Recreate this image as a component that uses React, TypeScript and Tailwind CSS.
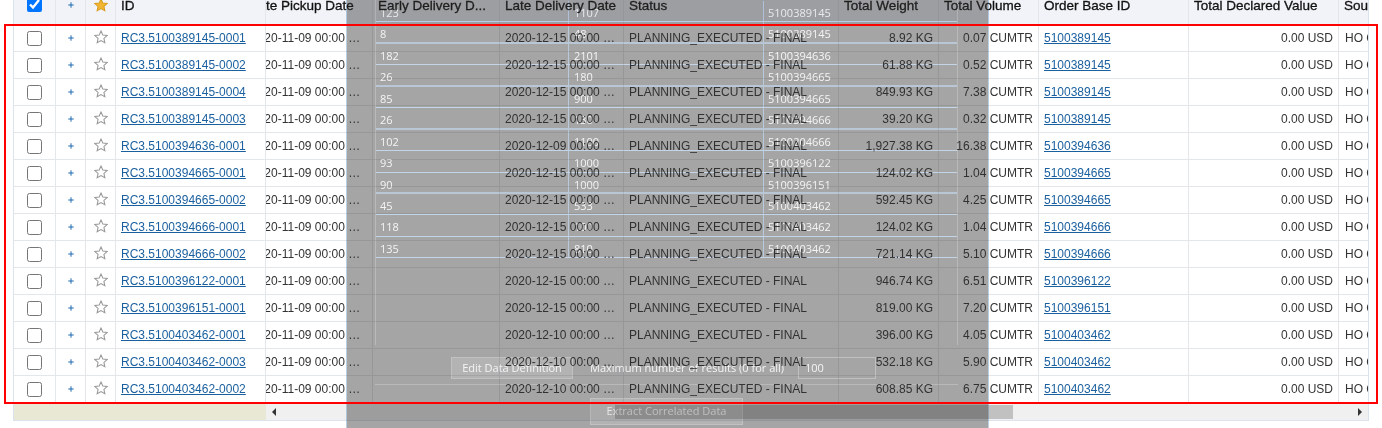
import { Plus } from "lucide-react";

type Rec = { id: string; late: string; weight: string; volume: string; base: string };

const recs: Rec[] = [
  { id: "RC3.5100389145-0001", late: "2020-12-15", weight: "8.92 KG", volume: "0.07", base: "5100389145" },
  { id: "RC3.5100389145-0002", late: "2020-12-15", weight: "61.88 KG", volume: "0.52", base: "5100389145" },
  { id: "RC3.5100389145-0004", late: "2020-12-15", weight: "849.93 KG", volume: "7.38", base: "5100389145" },
  { id: "RC3.5100389145-0003", late: "2020-12-15", weight: "39.20 KG", volume: "0.32", base: "5100389145" },
  { id: "RC3.5100394636-0001", late: "2020-12-09", weight: "1,927.38 KG", volume: "16.38", base: "5100394636" },
  { id: "RC3.5100394665-0001", late: "2020-12-15", weight: "124.02 KG", volume: "1.04", base: "5100394665" },
  { id: "RC3.5100394665-0002", late: "2020-12-15", weight: "592.45 KG", volume: "4.25", base: "5100394665" },
  { id: "RC3.5100394666-0001", late: "2020-12-15", weight: "124.02 KG", volume: "1.04", base: "5100394666" },
  { id: "RC3.5100394666-0002", late: "2020-12-15", weight: "721.14 KG", volume: "5.10", base: "5100394666" },
  { id: "RC3.5100396122-0001", late: "2020-12-15", weight: "946.74 KG", volume: "6.51", base: "5100396122" },
  { id: "RC3.5100396151-0001", late: "2020-12-15", weight: "819.00 KG", volume: "7.20", base: "5100396151" },
  { id: "RC3.5100403462-0001", late: "2020-12-10", weight: "396.00 KG", volume: "4.05", base: "5100403462" },
  { id: "RC3.5100403462-0003", late: "2020-12-10", weight: "532.18 KG", volume: "5.90", base: "5100403462" },
  { id: "RC3.5100403462-0002", late: "2020-12-10", weight: "608.85 KG", volume: "6.75", base: "5100403462" },
];

const behind = [
  ["123", "1107", "5100389145"],
  ["8", "48", "5100389145"],
  ["182", "2101", "5100394636"],
  ["26", "180", "5100394665"],
  ["85", "900", "5100394665"],
  ["26", "130", "5100394666"],
  ["102", "1100", "5100204666"],
  ["93", "1000", "5100396122"],
  ["90", "1000", "5100396151"],
  ["45", "533", "5100403462"],
  ["118", "100", "5100403462"],
  ["135", "810", "5100403462"],
];

// the lines under these rows read heavier in the picture
const heavy = [1, 3, 5, 8];

function Star({ filled }: { filled?: boolean }) {
  return (
    <svg width="14" height="14" viewBox="0 0 24 24" className="-mt-[2px]" fill={filled ? "#f2b632" : "none"} stroke={filled ? "#d99e1f" : "#999999"} strokeWidth="1.8">
      <path d="M12 1.8l3.1 6.9 7.4.8-5.5 5 1.6 7.4-6.6-3.8-6.6 3.8 1.6-7.4-5.5-5 7.4-.8z" />
    </svg>
  );
}

function HeaderCell({ label, className }: { label: string; className: string }) {
  return (
    <div className={`${className} h-full shrink-0 overflow-hidden whitespace-nowrap border-r border-[#e3e6eb] pl-[5px] text-[13.5px] leading-[11px] text-[#111] [-webkit-text-stroke:0.3px_#111]`}>
      {label}
    </div>
  );
}

function RecRow({ rec }: { rec: Rec }) {
  const cell = "flex h-full shrink-0 items-center overflow-hidden whitespace-nowrap border-r border-[#e4e7ea]";
  return (
    <div className="flex h-[27px] border-b border-[#e4e7ea] text-[12px] text-[#333]">
      <div className={`${cell} w-[42px] justify-center`}>
        <input type="checkbox" className="h-[15px] w-[15px]" />
      </div>
      <div className={`${cell} w-[30px] justify-center text-[#1f6bb0]`}>
        <Plus size={8} strokeWidth={3} className="-mt-[1px]" />
      </div>
      <div className={`${cell} w-[30px] justify-center`}>
        <Star />
      </div>
      <div className={`${cell} w-[150px] pl-[5px]`}>
        <a href="#" className="text-[#1a5f9e] underline">{rec.id}</a>
      </div>
      <div className="min-w-0 flex-1 overflow-hidden">
        <div className="-ml-[20px] flex h-full w-max">
          <div className={`${cell} w-[127px] pl-[5px]`}>2020-11-09 00:00 …</div>
          <div className={`${cell} w-[127px]`} />
          <div className={`${cell} w-[124px] pl-[5px]`}>{rec.late} 00:00 …</div>
          <div className={`${cell} w-[215px] pl-[5px]`}>PLANNING_EXECUTED - FINAL</div>
          <div className={`${cell} w-[100px] justify-end pr-[5px]`}>{rec.weight}</div>
          <div className={`${cell} w-[100px] justify-end pr-[5px]`}>{rec.volume} CUMTR</div>
          <div className={`${cell} w-[150px] pl-[5px]`}>
            <a href="#" className="text-[#1a5f9e] underline">{rec.base}</a>
          </div>
          <div className={`${cell} w-[150px] justify-end pr-[5px]`}>0.00 USD</div>
          <div className={`${cell} w-[100px] pl-[6px]`}>HO CUMTR</div>
        </div>
      </div>
    </div>
  );
}

function GridBehind() {
  return (
    <div className="ml-[28px] w-[583px] border-x border-[#b4b4b4] pt-[1px]">
      {behind.map((r, i) => (
        <div
          key={r[0] + r[2]}
          className={`flex h-[21.45px] text-[11px] leading-[15px] text-[#f4f4f4] ${heavy.includes(i) ? "border-b-2 border-[#b4c2d2]" : "border-b border-[#c0d2e6]"}`}
        >
          <div className="w-[192px] pl-[4px] pt-[4px]">{r[0]}</div>
          <div className="w-[195px] border-l border-[#b4c6da] pl-[5px] pt-[4px]">{r[1]}</div>
          <div className="flex-1 border-l border-[#b4c6da] pl-[4px] pt-[4px]">{r[2]}</div>
        </div>
      ))}
      <div className="h-[87px]" />
    </div>
  );
}

export default function App() {
  return (
    <div className="relative isolate h-[428px] w-[1382px] overflow-hidden bg-white font-['Liberation_Sans',Arial,sans-serif]">
      <div className="ml-[13px] w-[1356px] border-x border-b border-[#dbe3ec]">
        <div className="flex h-[25px] border-b border-[#e3e6eb] bg-[#f1f3f8]">
          <div className="flex h-full w-[42px] shrink-0 justify-center border-r border-[#e3e6eb]">
            <input type="checkbox" defaultChecked className="-mt-[3px] h-[15px] w-[15px]" />
          </div>
          <div className="flex h-full w-[30px] shrink-0 justify-center border-r border-[#e3e6eb] pt-[1px] text-[#1f6bb0]">
            <Plus size={8} strokeWidth={3} />
          </div>
          <div className="flex h-full w-[30px] shrink-0 justify-center border-r border-[#e3e6eb]">
            <Star filled />
          </div>
          <HeaderCell label="ID" className="w-[150px]" />
          <div className="min-w-0 flex-1 overflow-hidden">
            <div className="-ml-[20px] flex h-full w-max">
              <HeaderCell label="Late Pickup Date" className="w-[127px]" />
              <HeaderCell label="Early Delivery D..." className="w-[127px]" />
              <HeaderCell label="Late Delivery Date" className="w-[124px]" />
              <HeaderCell label="Status" className="w-[215px]" />
              <HeaderCell label="Total Weight" className="w-[100px]" />
              <HeaderCell label="Total Volume" className="w-[100px]" />
              <HeaderCell label="Order Base ID" className="w-[150px]" />
              <HeaderCell label="Total Declared Value" className="w-[150px]" />
              <HeaderCell label="Source" className="w-[100px]" />
            </div>
          </div>
        </div>

        {recs.map((r) => (
          <RecRow key={r.id} rec={r} />
        ))}

        <div className="flex h-[17px]">
          <div className="w-[252px] shrink-0 bg-[#e9e8d5]" />
          <div className="flex flex-1 items-center bg-[#f0f0f0]">
            <div className="ml-[6px] h-0 w-0 border-y-[4px] border-r-[4px] border-y-transparent border-r-[#333]" />
            <div className="ml-[339px] h-[14px] w-[398px] bg-[#c1c1c1]" />
            <div className="ml-auto mr-[6px] h-0 w-0 border-y-[4px] border-l-[4px] border-y-transparent border-l-[#333]" />
          </div>
        </div>
      </div>

      {/* translucent window lying over the table */}
      <div className="absolute left-[346px] top-0 h-[428px] w-[643px] border-x border-[#b5cde0] bg-[#9e9e9e] font-['Open_Sans',sans-serif] mix-blend-multiply">
        <GridBehind />
        <div className="absolute left-[28px] top-[384px] w-[583px] border-t border-[#b4b4b4]" />
        <div className="absolute left-[104px] top-[357px] flex h-[22px] items-center gap-[17px] text-[11px] text-[#f4f4f4]">
          <div className="flex h-[22px] w-[122px] items-center justify-center border border-[#bcbcbc] bg-[#adadad]">Edit Data Definition</div>
          <div className="w-[191px] whitespace-nowrap">Maximum number of results (0 for all)</div>
          <div className="flex h-[22px] w-[78px] items-center border border-[#bcbcbc] pl-[6px]">100</div>
        </div>
        <div className="absolute left-[243px] top-[398px] flex h-[27px] w-[153px] items-center justify-center border border-[#bcbcbc] bg-[#adadad] text-[11px] text-[#f4f4f4]">
          Extract Correlated Data
        </div>
      </div>
      <div className="absolute left-[346px] top-0 h-[428px] w-[643px] bg-white/[0.08]" />

      {/* red highlight drawn on the screenshot */}
      <div className="absolute left-[4px] top-[24px] h-[380px] w-[1374px] border-2 border-[#f00]" />
    </div>
  );
}
